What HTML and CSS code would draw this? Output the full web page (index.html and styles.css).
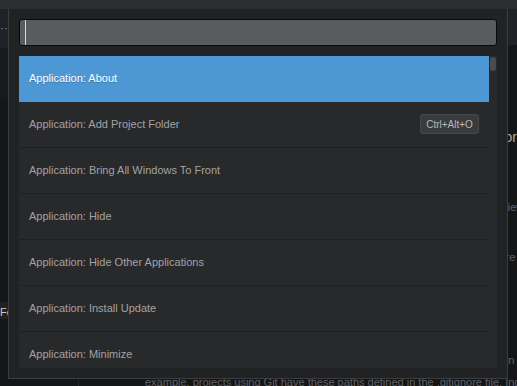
FILE: index.html
```html
<!DOCTYPE html>
<html>
<head>
<meta charset="utf-8">
<link rel="stylesheet" href="styles.css">
</head>
<body>
<div class="topbar"></div>
<div class="workspace">
  <aside class="sidebar">
    <div class="sb-tabs"><span class="dots">&middot;&middot;&middot;</span></div>
    <div class="sb-head"></div>
    <div class="sb-item">Folder</div>
  </aside>
  <main class="editor">
    <div class="ed-tabs"></div>
    <div class="ed-body">
      <div class="ln heading l1">Ignoring files in the project using the fuzzy finder settings for everything</div>
      <div class="ln l2">You can configure which files are ignored by the fuzzy finder and the tree view in the settings or</div>
      <div class="ln l3">Some of these settings also affect the tree view and other packages that are bundled with the app</div>
      <div class="ln l4">By default Atom ignores version control directories and files that are listed in the settings or</div>
      <div class="ln l5">example, projects using Git have these paths defined in the .gitignore file. Individual</div>
    </div>
  </main>
</div>

<div class="palette">
  <div class="query"><span class="caret"></span></div>
  <div class="list">
    <ul class="items">
      <li class="item selected"><span>Application: About</span></li>
      <li class="item"><span>Application: Add Project Folder</span><kbd class="key">Ctrl+Alt+O</kbd></li>
      <li class="item"><span>Application: Bring All Windows To Front</span></li>
      <li class="item"><span>Application: Hide</span></li>
      <li class="item"><span>Application: Hide Other Applications</span></li>
      <li class="item"><span>Application: Install Update</span></li>
      <li class="item"><span>Application: Minimize</span></li>
    </ul>
    <div class="scrollbar"><div class="thumb"></div></div>
  </div>
</div>
</body>
</html>
```
FILE: styles.css
```css
* { box-sizing: border-box; }
html, body {
  margin: 0;
  width: 517px;
  height: 386px;
  overflow: hidden;
  background: #141517;
  font-family: "Liberation Sans", Arial, sans-serif;
}
.topbar {
  height: 9px;
  background: #2d2e30;
}
.workspace {
  display: flex;
  height: 377px;
}
.sidebar {
  width: 79px;
  background: #151618;
  border-right: 1px solid #26272a;
  display: flex;
  flex-direction: column;
}
.sb-tabs {
  height: 39px;
  background: #1e2226;
  color: #4d8fc9;
  font-size: 12px;
  line-height: 39px;
}
.sb-head {
  height: 49px;
  background: #191a1c;
}
.sb-item {
  margin-top: 205px;
  height: 17px;
  background: #202124;
  color: #c8c8c8;
  font-size: 11px;
  line-height: 11px;
  display: flex;
  align-items: flex-end;
  padding-bottom: 1px;
  white-space: nowrap;
  overflow: hidden;
}
.editor {
  flex: 1;
  min-width: 0;
  display: flex;
  flex-direction: column;
}
.ed-tabs {
  height: 36px;
  background: #1f2327;
}
.ed-body {
  flex: 1;
  padding-left: 66px;
  overflow: hidden;
  display: flex;
  flex-direction: column;
}
.ln {
  white-space: nowrap;
  font-size: 11px;
  line-height: 22px;
  color: #606163;
  height: 22px;
}
.heading { color: #a9a9a9; font-size: 14px; }
.l1 { margin-top: 81px; }
.l2 { margin-top: 48px; }
.l3 { margin-top: 28px; }
.l4 { margin-top: 81px; }
.l5 { margin-top: 0; }

.palette {
  position: absolute;
  left: 8px;
  top: 9px;
  width: 500px;
  height: 370px;
  background: #212224;
  border: 1px solid #3c3d40;
  border-top: none;
  padding: 10px;
  display: flex;
  flex-direction: column;
  gap: 10px;
}
.query {
  height: 27px;
  background: #5a5b5d;
  border: 1px solid #08090a;
  border-radius: 3px;
  padding-left: 5px;
  display: flex;
}
.caret {
  width: 1px;
  background: #d8d8d8;
  height: 100%;
}
.list {
  height: 312px;
  background: #28292b;
  display: flex;
  overflow: hidden;
}
.items {
  list-style: none;
  margin: 0;
  padding: 0;
  width: 470px;
}
.item {
  height: 46px;
  border-bottom: 1px solid #1f2022;
  display: flex;
  align-items: center;
  justify-content: space-between;
  padding: 0 10px 1px 10px;
  font-size: 11px;
  color: #a3a3a3;
}
.item.selected {
  background: #4d98d4;
  border-bottom-color: #4d98d4;
  color: #ffffff;
  text-shadow: 0 1px 0 rgba(0,0,0,0.25);
}
.key {
  font-family: "Liberation Sans", Arial, sans-serif;
  font-size: 10px;
  color: #b8b8b8;
  background: #3a3b3d;
  border: 1px solid #47484b;
  border-radius: 3px;
  height: 20px;
  width: 59px;
  display: flex;
  align-items: center;
  justify-content: center;
}
.scrollbar {
  width: 8px;
  padding: 1px 1px 0 1px;
}
.thumb {
  height: 14px;
  background: #4a4b4e;
  border-radius: 3px;
}
```
